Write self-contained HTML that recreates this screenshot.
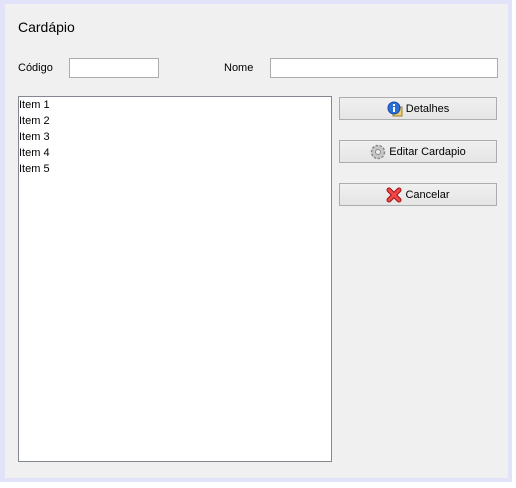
<!DOCTYPE html>
<html><head><style>
body{margin:0;width:516px;height:488px;background:#fff;font-family:"Liberation Sans",Tahoma,sans-serif;font-size:11px;color:#000;position:relative;overflow:hidden}
.frame{position:absolute;left:0;top:0;width:512px;height:482px;background:#e2e2f8}
.inner{position:absolute;left:5px;top:4px;width:503px;height:474px;background:#f0f0f0}
.a{position:absolute}
.inp{position:absolute;background:#fff;border:1px solid #acacac;box-sizing:border-box}
.btn{position:absolute;left:339px;width:158px;height:23px;box-sizing:border-box;border:1px solid #adadad;background:linear-gradient(#f0f0f0,#e5e5e5);display:flex;align-items:center;justify-content:center;gap:3px}
.list div{height:16px;line-height:16px}
</style></head><body>
<div class="frame"></div><div class="inner"></div>
<div class="a" style="left:18px;top:19px;font-size:14px">Cardápio</div>
<div class="a" style="left:18px;top:62px">Código</div>
<div class="inp" style="left:69px;top:58px;width:90px;height:20px"></div>
<div class="a" style="left:224px;top:62px">Nome</div>
<div class="inp" style="left:270px;top:58px;width:228px;height:20px"></div>
<div class="inp list" style="left:18px;top:96px;width:314px;height:366px;border-color:#828790;padding:0 0 0 0">
<div>Item 1</div><div>Item 2</div><div>Item 3</div><div>Item 4</div><div>Item 5</div></div>
<div class="btn" style="top:97px"><svg width="16" height="16" viewBox="0 0 16 16"><rect x="6" y="6" width="9" height="9" fill="#e8d070" stroke="#a08030"/><circle cx="7" cy="7" r="6" fill="#2a6fd8" stroke="#1a4aa0"/><rect x="6" y="6" width="2" height="5" fill="#fff"/><rect x="6" y="3" width="2" height="2" fill="#fff"/></svg>Detalhes</div>
<div class="btn" style="top:140px"><svg width="16" height="16" viewBox="0 0 16 16"><circle cx="8" cy="8" r="6.5" fill="#c8c8c8" stroke="#888" stroke-width="1.5" stroke-dasharray="2.5 1.5"/><circle cx="8" cy="8" r="2.5" fill="#eee" stroke="#888"/></svg>Editar Cardapio</div>
<div class="btn" style="top:183px"><svg width="16" height="16" viewBox="0 0 16 16"><path d="M3 3L13 13M13 3L3 13" stroke="#a01010" stroke-width="5" stroke-linecap="round"/><path d="M3 3L13 13M13 3L3 13" stroke="#f04848" stroke-width="3" stroke-linecap="round"/></svg>Cancelar</div>
</body></html>
